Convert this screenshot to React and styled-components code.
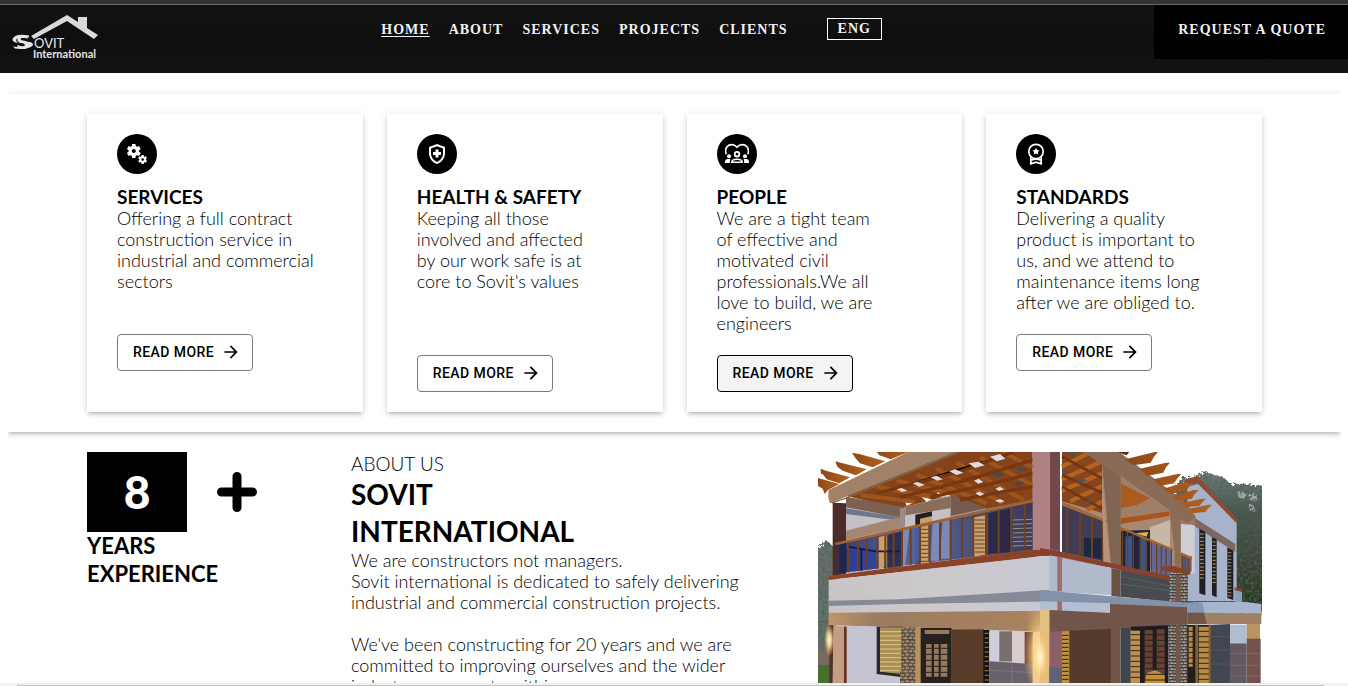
import React from 'react';
import styled, { createGlobalStyle } from 'styled-components';
import { MdMiscellaneousServices, MdOutlineHealthAndSafety, MdArrowForward } from 'react-icons/md';

const GlobalStyle = createGlobalStyle`
  *, *::before, *::after { box-sizing: border-box; }
  html, body { margin: 0; background: #fff; color: #000; }
  body { font-family: Lato, sans-serif; font-weight: 300; }
  h1, h2, h3, p { margin: 0; }
`;

const Page = styled.div`
  height: 100vh;
  display: flex;
  flex-direction: column;
  overflow: hidden;
`;

const TopEdge = styled.div`
  flex: none;
  height: 5px;
  background: #333;
  border-bottom: 1px solid #6a6a6a;
`;

const Header = styled.header`
  flex: none;
  height: 68px;
  display: grid;
  grid-template-columns: 9fr auto 11fr;
  align-items: start;
  background: linear-gradient(#131313, #0e0e0e 50%, #131313);
  color: #f2f2f2;
`;

const Brand = styled.a`
  display: block;
  padding: 9px 0 0 11px;
  height: 56px;
`;

const Nav = styled.nav`
  display: flex;
  gap: 19px;
  padding: 13px 0 0 0;
`;

const serifLabel = `
  font-family: "Liberation Serif", serif;
  font-weight: 700;
  font-size: 14px;
  line-height: 24px;
  letter-spacing: 1px;
`;

const NavLink = styled.a`
  ${serifLabel}
  color: inherit;
  text-decoration: ${(p) => (p.$active ? 'underline' : 'none')};
  text-underline-offset: 2px;
`;

const Language = styled.button`
  ${serifLabel}
  line-height: 20px;
  height: 22px;
  margin-left: 20px;
  padding: 0 10px;
  color: inherit;
  background: transparent;
  border: 1px solid #fff;
`;

const Quote = styled.a`
  ${serifLabel}
  justify-self: end;
  height: 54px;
  padding: 13px 22px 0 24px;
  background: #000;
  color: inherit;
  text-decoration: none;
`;

const Main = styled.main`
  flex: 1;
  min-height: 0;
  overflow: hidden;
  padding: 21px 7px 0 8px;
`;

const softShadow = '0 3px 3px -2px rgba(0,0,0,.12), 0 3px 4px rgba(0,0,0,.1), 0 1px 8px rgba(0,0,0,.12)';

const Features = styled.section`
  padding: 20px 0;
  box-shadow: ${softShadow};
  clip-path: inset(-12px 0);
`;

const Container = styled.div`
  max-width: 1175px;
  margin: 0 auto;
`;

const CardGrid = styled(Container)`
  display: grid;
  grid-template-columns: repeat(4, 1fr);
  gap: 24px;
`;

const Card = styled.article`
  padding: 20px 30px;
  background: #fff;
  box-shadow: ${softShadow};
`;

const IconDisc = styled.div`
  width: 40px;
  height: 40px;
  display: grid;
  place-items: center;
  border-radius: 50%;
  background: #000;
  color: #fff;
`;

const CardTitle = styled.h3`
  margin-top: 12px;
  font-size: 19px;
  line-height: 22px;
  font-weight: 700;
`;

const BodyText = styled.p`
  font-size: 18px;
  line-height: 21px;
  white-space: pre-line;
  min-height: ${(p) => (p.$rows || 1) * 21}px;
`;

const MoreButton = styled.button`
  display: flex;
  align-items: center;
  gap: 7px;
  height: 37px;
  margin-top: 21px;
  padding: 0 11px 2px 15px;
  border: 1px solid ${(p) => (p.$hover ? '#000' : '#7a7a7a')};
  border-radius: 4px;
  background: ${(p) => (p.$hover ? '#f4f4f4' : '#fff')};
  color: #000;
  font-family: Roboto, sans-serif;
  font-weight: 500;
  font-size: 14px;
  line-height: 24px;
  letter-spacing: 0.03em;
`;

const About = styled(Container)`
  display: grid;
  grid-template-columns: 264px 1fr 444px;
  padding-top: 20px;
  align-items: start;
`;

const CountRow = styled.div`
  display: flex;
  align-items: center;
  gap: 30px;
`;

const Count = styled.div`
  width: 100px;
  height: 80px;
  background: #000;
  color: #fff;
  font-size: 46px;
  line-height: 80px;
  font-weight: 900;
  text-align: center;
`;

const Years = styled.h2`
  font-size: 22px;
  line-height: 28px;
  font-weight: 700;
  white-space: pre-line;
`;

const Kicker = styled.p`
  font-size: 19px;
  line-height: 24px;
`;

const Name = styled.h1`
  font-size: 28px;
  line-height: 37px;
  font-weight: 700;
  white-space: pre-line;
`;

const Picture = styled.svg`
  display: block;
  width: 100%;
`;

const ScrollTrack = styled.div`
  flex: none;
  height: 3px;
  padding: 2px 24px 0 17px;
  background: #f1f1f1;
`;

const ScrollThumb = styled.div`
  height: 1px;
  background: #c1c1c1;
`;

function Logo() {
  return (
    <svg width="88" height="47" viewBox="0 0 88 47" role="img" aria-label="Sovit International">
      <path d="M20 22 L56 1 L67 8 V3 H76 V14 L87 21 L83 25 L56 7 L23 25 Z" fill="#d9d9d9" />
      <text x="5" y="35" fontFamily="DejaVu Sans" fontWeight="700" fontSize="19" fill="#e4e4e4">S</text>
      <path d="M18 21.500Q4 19 1.500 25Q1 28 7 29Q4 26.500 6 24.500Q9 22.500 18 23.500ZM13 28Q22 27 22 31Q20 35.500 4 34.500L2 32.500Q14 34 17 31.500Q18 30 13 29.500Z" fill="#e4e4e4" />
      <text x="23" y="34" fontFamily="Lato" fontWeight="400" fontSize="13" fill="#e4e4e4">OVIT</text>
      <text x="22" y="44" fontFamily="Lato" fontWeight="700" fontSize="11" fill="#e4e4e4">International</text>
    </svg>
  );
}

function PeopleIcon() {
  return (
    <svg width="24" height="24" viewBox="0 0 24 24" fill="none" stroke="currentColor" strokeWidth="1.6">
      <path d="M1.300 12.200C.2 9.700 0.500 6.700 2.100 4.700C4.500 1.900 9 1.900 12 5.200C15 1.900 19.500 1.900 21.900 4.700C23.500 6.700 23.800 9.700 22.700 12.200" />
      <circle cx="12" cy="12.200" r="2.300" strokeWidth="1.800" />
      <path d="M6.800 20.300C6.900 18 8.500 17.300 12 17.300S17.100 18 17.200 20.300Z" />
      <circle cx="4" cy="14.200" r="2" fill="currentColor" stroke="none" />
      <circle cx="20" cy="14.200" r="2" fill="currentColor" stroke="none" />
      <path d="M0 21V19.500Q.3 17.300 2.500 17.100H5.500Q4.800 18 4.800 21ZM24 21V19.500Q23.700 17.300 21.500 17.100H18.500Q19.200 18 19.200 21Z" fill="currentColor" stroke="none" />
    </svg>
  );
}

function AwardIcon() {
  return (
    <svg width="24" height="24" viewBox="0 0 24 24" fill="none" stroke="currentColor" strokeWidth="1.700">
      <circle cx="12" cy="9.500" r="7.200" />
      <path d="M6.800 14.500V21.800L12 20.200L17.200 21.800V14.500M7 18.400Q12 15.800 17 18.400" />
      <path d="M12 5.800L13.100 8.100L15.600 8.400L13.800 10.100L14.300 12.600L12 11.400L9.700 12.600L10.200 10.100L8.400 8.400L10.900 8.100Z" fill="currentColor" stroke="none" />
    </svg>
  );
}

function PlusIcon() {
  return (
    <svg width="40" height="40" viewBox="0 0 40 40" aria-label="plus" role="img">
      <path d="M20 4.500V35.500M4.500 20H35.500" stroke="#000" strokeWidth="9" strokeLinecap="round" />
    </svg>
  );
}

/* A straight run of balusters between two sloping rails. */
function Balusters({ xs, top, bottom, color = '#70401f', width = 6 }) {
  return xs.map((x) => (
    <path key={x} d={`M${x} ${top(x)}V${bottom(x)}`} stroke={color} strokeWidth={width} />
  ));
}

function Bars({ x1, x2, from, to, step, color = '#2b2320', slope = 0 }) {
  const ys = [];
  for (let y = from; y <= to; y += step) ys.push(y);
  return ys.map((y) => <path key={y} d={`M${x1} ${y}L${x2} ${y + slope}`} stroke={color} strokeWidth="3" />);
}

function House() {
  return (
    <Picture viewBox="0 0 1332 693" role="img" aria-label="Two-storey house with a timber pergola">
      <defs>
        <linearGradient id="wall" x1="0" x2="1"><stop offset="0" stopColor="#c9c5c6" /><stop offset=".6" stopColor="#cdcace" /><stop offset="1" stopColor="#c6c9d4" /></linearGradient>
        <linearGradient id="tan" x1="0" x2="1"><stop offset="0" stopColor="#c0976b" /><stop offset=".2" stopColor="#9b7b62" /><stop offset=".85" stopColor="#a8825e" /><stop offset="1" stopColor="#e8bd78" /></linearGradient>
        <linearGradient id="wood" x1="0" x2="1"><stop offset="0" stopColor="#8d4818" /><stop offset="1" stopColor="#b4621f" /></linearGradient>
        <linearGradient id="glass" x1="0" x2="1"><stop offset="0" stopColor="#29356f" /><stop offset=".4" stopColor="#4f5d99" /><stop offset="1" stopColor="#34304d" /></linearGradient>
        <linearGradient id="tree" x1="0" x2="0" y1="0" y2="1"><stop offset="0" stopColor="#6d7a7c" /><stop offset=".3" stopColor="#48544f" /><stop offset="1" stopColor="#26331f" /></linearGradient>
        <radialGradient id="lamp"><stop offset="0" stopColor="#fffbe0" /><stop offset=".4" stopColor="#ffe09a" stopOpacity=".85" /><stop offset="1" stopColor="#f0b060" stopOpacity="0" /></radialGradient>
        <pattern id="stone" width="30" height="20" patternUnits="userSpaceOnUse"><rect width="30" height="20" fill="#4c3f35" /><path d="M1 2H13V8H1ZM16 1H28V7H16ZM0 11H7V17H0ZM10 11H23V18H10ZM26 11H30V17H26Z" fill="#a38d75" /></pattern>
        <pattern id="stoneCool" width="20" height="18" patternUnits="userSpaceOnUse"><rect width="20" height="18" fill="#4b4542" /><path d="M1 2H9V6H1ZM12 1H19V6H12ZM0 10H5V14H0ZM8 10H16V15H8Z" fill="#b0aaa6" /></pattern>
        <filter id="foliage" x="-5%" y="-5%" width="110%" height="110%">
          <feTurbulence type="fractalNoise" baseFrequency="0.12" numOctaves="3" seed="4" result="noise" />
          <feDisplacementMap in="SourceGraphic" in2="noise" scale="24" result="edge" />
          <feColorMatrix in="noise" type="matrix" values="0 0 0 0 .08  0 0 0 0 .12  0 0 0 0 .07  2.400 0 0 0 -1" result="dark" />
          <feComposite in="dark" in2="edge" operator="in" result="shade" />
          <feMerge><feMergeNode in="edge" /><feMergeNode in="shade" /></feMerge>
        </filter>
      </defs>

      <rect width="1332" height="693" fill="#fff" />

      <g transform="translate(-54 -36)">
        <path d="M54 325Q72 300 84 305L110 330V640H40V325Z" fill="#66706e" filter="url(#foliage)" />
        <path d="M54 630H100V675H54Z" fill="#756a5c" />
        <path d="M54 675H100V729H54Z" fill="#46702d" />
        <path d="M138 190L320 150L700 100V380L138 400Z" fill="#c3c0c6" />
        <path d="M138 205L300 232V242L138 222Z" fill="#70768b" />
        <path d="M138 272L312 228V262L138 300Z" fill="#a38770" />
        <path d="M452 160L700 120V215L452 245Z" fill="#a59ca8" />
        <path d="M138 168L460 36H698V180L560 206L452 165L300 205Z" fill="#85431b" />
        <path d="M138 170L314 202V258L300 232L138 202Z" fill="#7c6150" />
        <path d="M300 205H314V264L300 266Z" fill="#9c8b87" />
        <path d="M316 200L452 168V205L316 226Z" fill="#8b6e5a" />
        <path d="M452 165L560 205L452 228Z" fill="#755b52" />
        <path d="M314 182L345 186L320 198ZM362 168L395 178L380 186ZM412 152L450 156V168L412 172Z" fill="#f4f4f6" />
        <g stroke="#a0541d" strokeWidth="12">
          <path d="M180 165L345 185M230 140L400 172M290 122L470 165M350 104L560 190M410 86L610 190M470 68L670 180M540 52L698 136M610 38L698 82" />
        </g>
        <g stroke="#77380f" strokeWidth="10">
          <path d="M230 160L480 95L640 36M300 172L520 115L698 60M390 172L570 132L698 100M480 180L610 155L698 140" />
        </g>
        <path d="M506 70L535 65L554 76L525 84ZM570 50L600 42L616 56L590 64ZM448 94L465 88L490 98L470 105ZM392 112L410 107L428 118L412 122ZM338 130L352 126L374 134L358 140ZM290 148L305 144L322 152L306 156ZM522 122L536 116L550 126L535 131ZM586 146L600 140L612 148L597 153ZM526 160L538 155L553 162L540 168ZM585 182L600 177L614 184L600 188Z" fill="#dedce2" />
        <path d="M646 84L664 80L680 88L664 94ZM576 104L600 97L612 106L590 112ZM640 132L660 124L672 130L655 137Z" fill="#434a52" />
        <path d="M86 150L325 36H465L90 190Q82 170 86 150Z" fill="#a18268" />
        <path d="M90 188L140 172L465 36H480L145 174L98 190Z" fill="#82664f" />
        <g fill="url(#wood)">
          <path d="M54 114L118 132L84 150L74 162L68 146L54 138Z" />
          <path d="M62 86L78 92L150 112L118 130L80 118L70 104L62 100Z" />
          <path d="M106 64L122 68L200 88L168 106L128 92L112 80Z" />
          <path d="M156 38L178 42L256 64L218 82L180 70L166 54Z" />
          <path d="M230 36H325L272 58L238 46Z" />
        </g>
        <path d="M98 188L138 190V402L98 408Z" fill="#4d2b2b" />
        <path d="M346 224L396 214V368L346 374Z" fill="#241e24" />
        <path d="M360 236L396 228V366L360 370Z" fill="#c6a068" />
        <path d="M115 312L700 185V330L115 400Z" fill="url(#glass)" opacity=".93" />
        <path d="M236 292L262 284V380L236 386ZM362 262L390 254V368L362 372ZM522 232L556 226V344L522 350Z" fill="#c9a06a" />
        <path d="M305 272L328 266L316 376H302ZM398 250L418 244V362H392ZM428 240L450 238V356H420Z" fill="#8b98c5" opacity=".75" />
        <path d="M118 314L138 310V398H118ZM262 286L305 274V380L262 386ZM565 220L630 206V336L565 342Z" fill="#211f3b" opacity=".72" />
        <path d="M142 320L228 330V386L142 396Z" fill="#263fa6" opacity=".7" />
        <path d="M142 320L228 334H300M142 326V396M184 326V392M256 334V386" stroke="#171b2d" strokeWidth="5" fill="none" />
        <Bars x1={362} x2={390} from={268} to={364} step={12} color="#61462f" />
        <Bars x1={524} x2={554} from={240} to={344} step={12} color="#61462f" />
        <Bars x1={638} x2={696} from={240} to={330} step={13} color="#9b907d" slope={-2} />
        <Balusters xs={[144, 174, 200, 232, 256, 281, 306, 332, 360, 388, 420, 452, 486, 520, 558, 596, 634, 674]} top={(x) => 310 - (x - 110) * 0.22} bottom={(x) => 402 - (x - 110) * 0.128} />
        <path d="M106 312L450 236L698 182" stroke="#a0622f" strokeWidth="8" fill="none" />
        <path d="M86 408L698 328H752L780 334V346L750 346L86 420Z" fill="#8b4328" />
        <path d="M86 420L752 346H780V520L86 520Z" fill="url(#wall)" />
        <path d="M86 482L300 478L780 448V484L300 492L86 498Z" fill="#858a96" />
        <path d="M86 518L780 512V580L86 556Z" fill="url(#tan)" />
        <path d="M98 556L700 574V729H98Z" fill="#c6c4d0" />
        <path d="M88 556H104L98 729H88Z" fill="#53302d" />
        <path d="M100 556L138 560V729H98Z" fill="#c29f84" />
        <path d="M132 560H140V729H132Z" fill="#6a321c" />
        <path d="M230 560H308V712L230 702Z" fill="#272a2c" />
        <path d="M240 562H305V702L240 695Z" fill="#aa8f54" />
        <Bars x1={240} x2={304} from={575} to={696} step={13} color="#e0c688" />
        <path d="M304 562H350V729H300V690H304Z" fill="url(#stone)" />
        <path d="M346 562H366V729H346Z" fill="#b6935b" />
        <path d="M362 564H455V729H362Z" fill="#24211f" />
        <path d="M374 570H448V582H374ZM378 612H395V710H378ZM402 612H416V710H402ZM422 612H442V710H422Z" fill="#95795a" />
        <Bars x1={376} x2={444} from={625} to={710} step={18} />
        <path d="M455 568H552V729H452Z" fill="#593b2a" />
        <path d="M550 570H568V729H550Z" fill="#171410" />
        <Bars x1={554} x2={566} from={580} to={724} step={14} color="#a78049" />
        <path d="M568 574H598V664H568Z" fill="#d0cede" />
        <path d="M598 574H636V664H598Z" fill="#77706b" />
        <path d="M636 574H674V670H636Z" fill="#d8cecf" />
        <path d="M674 576H700V672H674Z" fill="#6e4432" />
        <path d="M568 664L700 672V729H568Z" fill="#69626d" />
        <path d="M568 690L700 698M636 668V729" stroke="#8a818a" strokeWidth="2" />
        <path d="M698 36H750V328L698 330Z" fill="#b08182" />
        <path d="M750 36H780V334L750 328Z" fill="#71484c" />
        <path d="M698 578L752 582V729H698Z" fill="#ead0a4" />
        <ellipse cx="722" cy="640" rx="52" ry="125" fill="url(#lamp)" />
        <ellipse cx="88" cy="600" rx="16" ry="50" fill="url(#lamp)" />
      </g>

      <g transform="translate(666 -36)">
        <path d="M410 130Q430 104 460 112Q492 88 530 106Q560 112 568 134Q610 124 690 146V520H410Z" fill="url(#tree)" filter="url(#foliage)" />
        <g fill="#c5ced8" opacity=".7" filter="url(#foliage)">
          <ellipse cx="605" cy="166" rx="12" ry="9" />
          <ellipse cx="640" cy="172" rx="13" ry="10" />
          <ellipse cx="636" cy="204" rx="7" ry="10" />
        </g>
        <path d="M442 140L474 132L590 246V484H442Z" fill="#a7b3cb" />
        <path d="M434 120L470 108L594 240L588 248L472 128L440 132Z" fill="#934a2e" />
        <path d="M440 218L586 312V336L440 244Z" fill="#7d6860" />
        <path d="M478 266L496 276V466L478 460ZM516 292L530 298V472L516 466ZM562 322L580 332V480L562 474Z" fill="#1f2023" />
        <Bars x1={480} x2={491} from={282} to={420} step={11} color="#c9a161" />
        <Bars x1={518} x2={527} from={306} to={430} step={11} color="#c9a161" />
        <Bars x1={563} x2={574} from={338} to={472} step={10} color="#a88457" />
        <path d="M584 448L606 454V486H584Z" fill="#8fa0bd" /><path d="M584 442L606 448V456L584 450Z" fill="#884128" />
        <path d="M66 36H160L400 180L446 230V400L66 370Z" fill="#a78975" />
        <path d="M66 36H150L186 68V218L66 184Z" fill="#85451f" />
        <g stroke="#b5621e" strokeWidth="13"><path d="M66 80L140 42M66 118L182 66M66 152L186 100M90 184L186 138M140 210L186 184" /></g>
        <g stroke="#733610" strokeWidth="8"><path d="M66 50L186 115M66 105L186 158M66 140L186 206" /></g>
        <path d="M76 36H118L98 46ZM66 92L85 98L66 102ZM108 124L130 116L142 122L120 130ZM130 184L150 180L158 186L142 190Z" fill="#4c555c" />
        <path d="M242 112L390 190V215L242 235Z" fill="#9e7f68" />
        <path d="M242 130L330 175L290 195L242 205Z" fill="#aa5b20" />
        <path d="M242 235L388 214V228L242 252Z" fill="#a9541c" />
        <path d="M330 262L390 240V330L330 296Z" fill="#c8b7a7" />
        <path d="M422 252L464 256V400H422Z" fill="#d0cdd4" />
        <path d="M400 210L466 234V254L424 250Z" fill="#99785d" />
        <path d="M66 196L190 244V364L66 336Z" fill="#423b54" />
        <path d="M132 294H186V358L132 348Z" fill="#1c2740" />
        <path d="M242 272L330 270V404L242 384Z" fill="#202637" />
        <path d="M256 290L276 288V386L256 382ZM302 290L320 294V396H302Z" fill="#3a568d" />
        <path d="M286 280L325 276L320 290Z" fill="#e1b64d" />
        <path d="M332 306L396 328V410L332 402Z" fill="#5f6798" />
        <path d="M422 342L452 356V398L422 388Z" fill="#555a83" />
        <Balusters xs={[82, 120, 156, 188]} top={(x) => 198 + (x - 70) * 0.4} bottom={(x) => 336 + (x - 70) * 0.2} />
        <Balusters xs={[247, 262, 280, 300, 318, 334, 350, 364, 378, 394]} top={(x) => 266 + (x - 242) * 0.42} bottom={(x) => 384 + (x - 242) * 0.16} width={4} />
        <Balusters xs={[428, 436, 446, 453]} top={() => 348} bottom={() => 394} width={3} />
        <path d="M68 190L200 244M242 264L400 330M422 340L456 356" stroke="#a5642d" strokeWidth="7" fill="none" />
        <path d="M186 72L242 80V380L212 370Q200 210 186 72Z" fill="#806552" />
        <path d="M186 76Q190 210 212 370L190 365Z" fill="#b69379" />
        <path d="M388 210L422 218V384L404 380V330Z" fill="#8b6c56" />
        <path d="M130 36H238L440 190L468 232L440 250L390 210L242 108L200 82Z" fill="#8a6b55" />
        <g fill="url(#wood)">
          <path d="M256 58L344 36H354L342 50L332 68L280 76ZM300 86L378 68H390L378 82L370 98L320 108ZM340 118L412 102H424L410 118L402 130L360 138ZM370 146L438 126L454 132L440 150L394 162ZM400 168L462 150H476L462 164L456 176L412 182ZM422 190L486 176H498L484 190L478 198L434 202ZM448 206L506 194H516L502 208L496 216L458 220Z" />
        </g>
        <path d="M232 36H268L260 46Z" fill="#572c17" />
        <path d="M0 324L66 336L214 370L400 410V428L214 384L66 352L0 346Z" fill="#87402b" />
        <path d="M28 346L66 354L214 384V466L28 454Z" fill="#b0bacb" />
        <path d="M214 384L242 390V472L214 468Z" fill="#6a5145" />
        <path d="M242 390L390 422V486L242 470Z" fill="#474b50" />
        <path d="M242 432L390 452M242 410L390 438" stroke="#61666b" strokeWidth="2" />
        <path d="M388 394H444V488H388Z" fill="url(#stoneCool)" />
        <path d="M362 380L400 378L450 392V404L362 390Z" fill="#874124" />
        <path d="M0 450L442 488V504L0 486Z" fill="#8392a8" />
        <path d="M0 484L210 490V518L0 510Z" fill="#b4c0d2" />
        <path d="M52 350H66V454H52ZM52 484H66V514H52Z" fill="#a06b72" />
        <path d="M28 510L210 518V492L442 502V556L28 578Z" fill="#705548" />
        <path d="M442 488L488 486L616 486L664 492V522L616 520L490 522L442 518Z" fill="#a7b6ce" />
        <path d="M442 488H488L494 522L442 520Z" fill="#8798b2" />
        <path d="M442 518L664 520V552H442Z" fill="#a08164" />
        <path d="M442 518H492L500 552H442Z" fill="#725747" />
        <path d="M0 576L66 574V729H0Z" fill="#8b606b" />
        <path d="M0 510H28V729H0Z" fill="#e4c080" />
        <path d="M28 680L66 684V729H28Z" fill="#606273" />
        <path d="M66 574H90V729H66Z" fill="#bd913d" />
        <Bars x1={67} x2={86} from={586} to={724} step={12} />
        <path d="M88 572L214 566V729H88Z" fill="#553b2d" />
        <path d="M212 566H242V729H212Z" fill="#715548" />
        <path d="M242 564H272V729H242Z" fill="#3e454d" />
        <path d="M272 560L386 556V729H272Z" fill="#1d1d20" />
        <path d="M272 572H300V729H272Z" fill="#bf9151" />
        <path d="M314 570H338V729H314ZM350 568H374V729H350Z" fill="#674232" />
        <path d="M320 700L345 690L374 705V729H314Z" fill="#c68e35" />
        <Bars x1={272} x2={300} from={584} to={724} step={16} />
        <Bars x1={314} x2={376} from={584} to={724} step={17} />
        <path d="M386 554H444V729H386Z" fill="url(#stoneCool)" />
        <path d="M407 404H422V486H407ZM408 554H422V729H408Z" fill="#715649" />
        <path d="M442 554H512V729H442Z" fill="#241d18" />
        <path d="M446 560H458V680H446ZM476 560H508V729H476Z" fill="#b58b46" />
        <Bars x1={446} x2={508} from={574} to={722} step={16} />
        <path d="M466 554H474V729H466ZM506 554H513V729H506Z" fill="#856136" />
        <path d="M512 554L570 552V729H512Z" fill="#414750" />
        <path d="M512 590H570M512 630H570M512 672H570" stroke="#595f68" strokeWidth="2" />
        <path d="M570 554H620V610H570Z" fill="#b0bdd1" /><path d="M620 552H660V600H620Z" fill="#bd9360" />
        <path d="M570 610H620V729H570Z" fill="#625861" /><path d="M620 596H662V729H620Z" fill="#73524d" />
        <path d="M570 640H660M570 676H660M570 708H660" stroke="#81727a" strokeWidth="2" />
        <ellipse cx="0" cy="650" rx="28" ry="80" fill="url(#lamp)" />
      </g>
    </Picture>
  );
}

const links = ['HOME', 'ABOUT', 'SERVICES', 'PROJECTS', 'CLIENTS'];

const cards = [
  { title: 'SERVICES', rows: 5, icon: <MdMiscellaneousServices size={24} />, text: 'Offering a full contract\nconstruction service in\nindustrial and commercial\nsectors' },
  { title: 'HEALTH & SAFETY', rows: 6, icon: <MdOutlineHealthAndSafety size={24} />, text: "Keeping all those\ninvolved and affected\nby our work safe is at\ncore to Sovit's values" },
  { title: 'PEOPLE', rows: 6, hover: true, icon: <PeopleIcon />, text: 'We are a tight team\nof effective and\nmotivated civil\nprofessionals.We all\nlove to build, we are\nengineers' },
  { title: 'STANDARDS', rows: 5, icon: <AwardIcon />, text: 'Delivering a quality\nproduct is important to\nus, and we attend to\nmaintenance items long\nafter we are obliged to.' },
];

export default function App() {
  return (
    <Page>
      <GlobalStyle />
      <TopEdge />
      <Header>
        <Brand href="#home"><Logo /></Brand>
        <Nav>
          {links.map((label, i) => (
            <NavLink key={label} href={`#${label.toLowerCase()}`} $active={i === 0}>{label}</NavLink>
          ))}
          <Language type="button">ENG</Language>
        </Nav>
        <Quote href="#quote">REQUEST A QUOTE</Quote>
      </Header>
      <Main>
        <Features>
          <CardGrid>
            {cards.map((card) => (
              <Card key={card.title}>
                <IconDisc>{card.icon}</IconDisc>
                <CardTitle>{card.title}</CardTitle>
                <BodyText $rows={card.rows}>{card.text}</BodyText>
                <MoreButton type="button" $hover={card.hover}>
                  READ MORE <MdArrowForward size={20} />
                </MoreButton>
              </Card>
            ))}
          </CardGrid>
        </Features>
        <About as="section">
          <div>
            <CountRow><Count>8</Count><PlusIcon /></CountRow>
            <Years>{'YEARS\nEXPERIENCE'}</Years>
          </div>
          <div>
            <Kicker>ABOUT US</Kicker>
            <Name>{'SOVIT\nINTERNATIONAL'}</Name>
            <BodyText>{"We are constructors not managers.\nSovit international is dedicated to safely delivering\nindustrial and commercial construction projects.\n\nWe've been constructing for 20 years and we are\ncommitted to improving ourselves and the wider\nindustry we operate within."}</BodyText>
          </div>
          <House />
        </About>
      </Main>
      <ScrollTrack><ScrollThumb /></ScrollTrack>
    </Page>
  );
}
